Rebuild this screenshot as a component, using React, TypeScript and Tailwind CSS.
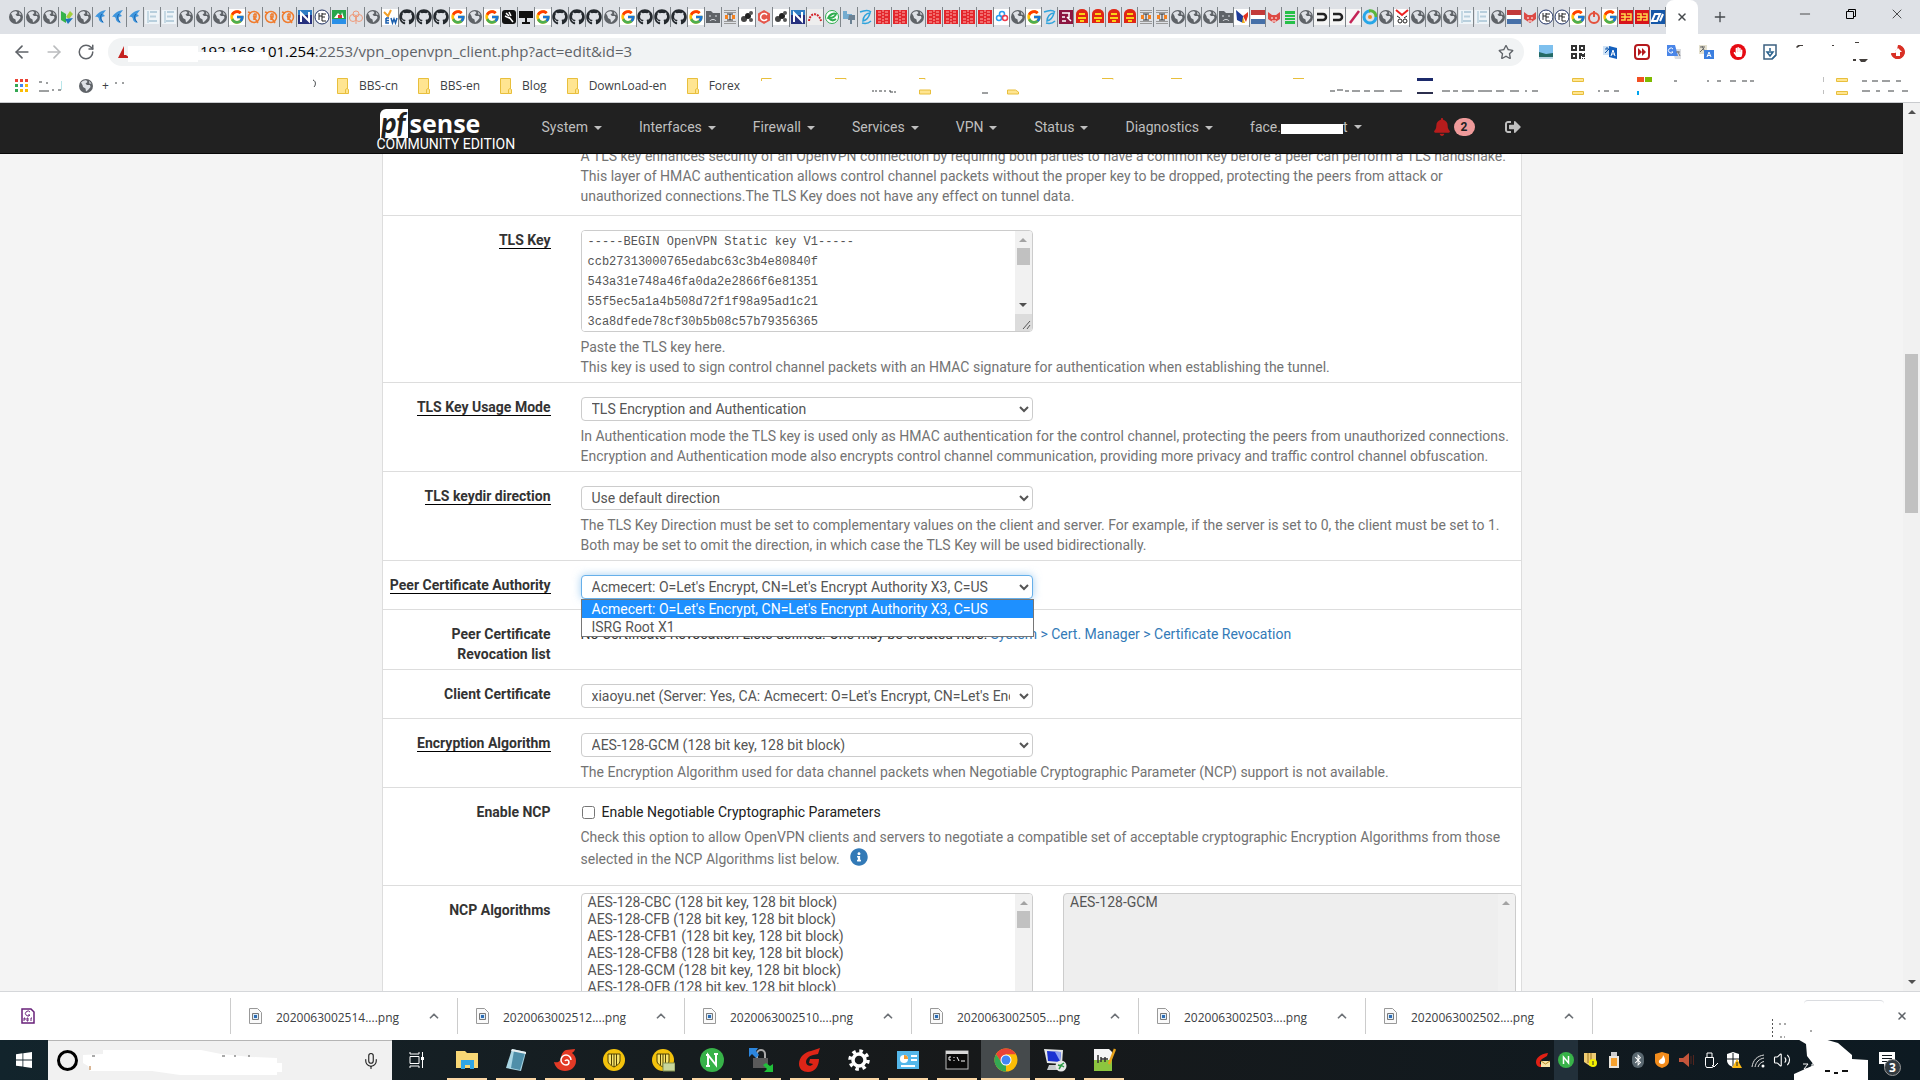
import type { ReactNode } from "react"
import { FcGoogle } from "react-icons/fc"
import { FaGithub, FaBell, FaSignOutAlt, FaInfoCircle, FaBluetoothB, FaQrcode, FaHandPaper, FaRegStar } from "react-icons/fa"
import { ArrowLeft, ArrowRight, RotateCw, ChevronUp, X, Plus, Minus, Mic, Volume2 } from "lucide-react"

const wideTabs =
    "globe globe globe leaf globe bird bird bird doc doc globe globe globe google orange orange orange navy he picture bio globe ew github github github google globe google hand wine google github github github globe google github github github google sad board bug hex bug navy arc eco blocks pen grid grid globe grid grid grid grid".split(" ")
const narrowTabs =
    "cloud globe google pen maroon guard guard guard guard board board globe globe globe sad butterfly flag cat stack globe magnet magnet feather swirl globe knot globe globe globe doc doc globe flag cat he he google power google red red dm".split(" ")

const menus = ["System", "Interfaces", "Firewall", "Services", "VPN", "Status", "Diagnostics"]

const tlsKey = `-----BEGIN OpenVPN Static key V1-----
ccb27313000765edabc63c3b4e80840f
543a31e748a46fa0da2e2866f6e81351
55f5ec5a1a4b508d72f1f98a95ad1c21
3ca8dfede78cf30b5b08c57b79356365`

const algorithms = ["CBC", "CFB", "CFB1", "CFB8", "GCM", "OFB"]
const downloads = ["2020063002514", "2020063002512", "2020063002510", "2020063002505", "2020063002503", "2020063002502"]

function Svg({ children, size = "h-4 w-4", box = "0 0 16 16" }: { children: ReactNode; size?: string; box?: string }) {
    return (
        <svg viewBox={box} className={`${size} shrink-0`} aria-hidden="true">
            {children}
        </svg>
    )
}

const favicons: Record<string, ReactNode> = {
    globe: (
        <>
            <circle cx="8" cy="8" r="7" fill="#5f6368" />
            <path d="M3 4.500c2-2 4-2.500 5.500-2l1 1.500-2 1.500 1.500 1.500h3l.5 2-2.500 3-2 1.500-.5-3-2.500-1.500L4.500 7zM11 2.800l2.500 2.700-2 .2z" fill="#dee1e6" />
        </>
    ),
    leaf: <><path d="M2 2l5 3v9l-5-3z" fill="#36b34a" /><path d="M7 8l4-6 3 3-4 5z" fill="#a5cf3a" /><path d="M6 10l8-1-5 6z" fill="#1c75bc" /></>,
    bird: <><path d="M13 1C7 2 4 5 2 8c3-1 4 1 4 3 1 2 3 3 5 3-2-2-3-4-2-6l3-1-2-2z" fill="#3f96dd" /><path d="M9 5c-2 2-2 5 1 8" stroke="#155fa8" fill="none" /></>,
    doc: <><rect x="1" y="1" width="14" height="14" fill="#eef4f8" /><path d="M4 2v12" stroke="#c6d9e4" strokeWidth="2" /><path d="M6 3h7M6 7.500h6M5 12h8" stroke="#b8cfdd" strokeWidth="2" /></>,
    orange: <><circle cx="8" cy="8" r="5.500" stroke="#f07c2e" strokeWidth="1.500" fill="none" /><path d="M2 3l3 1M8 5v6M8 5h2v3H8l4 6" stroke="#f07c2e" strokeWidth="1.500" fill="none" /></>,
    navy: <><rect x="1" y="1" width="14" height="14" fill="#26307e" /><path d="M1 1h14v5H1z" fill="#2f7dc4" /><path d="M4 13V4l8 8V3" stroke="#fff" strokeWidth="2" fill="none" /></>,
    he: <><circle cx="8" cy="8" r="7" fill="#fff" stroke="#1f3163" /><path d="M5 4v7M8 4v8M5 7h3M8 5h4M8 8h3M8 12h4" stroke="#222" fill="none" /></>,
    picture: <><rect x="1" y="1" width="14" height="14" fill="#27a54a" /><path d="M1 10h14v5H1z" fill="#2a90e8" /><path d="M3 9l4-5 3 3 1-4 2 6z" fill="#fff" /><path d="M7 6h4v3H7z" fill="#d33" /></>,
    bio: <><circle cx="8" cy="5" r="3" stroke="#ee9b7c" fill="none" /><circle cx="5" cy="9" r="3.500" stroke="#ee9b7c" fill="none" /><circle cx="11" cy="9" r="3.500" stroke="#ee9b7c" fill="none" /><path d="M8 7v8" stroke="#ee9b7c" /></>,
    ew: <><rect width="16" height="16" fill="#fff" /><path d="M2 3l4 4 3-6" stroke="#f2a02a" strokeWidth="2" fill="none" /><path d="M4 9h3M4 9v5h3M4 11.500h3M9 9l1.500 5L12 10l1.500 4L15 9" stroke="#1b5fae" strokeWidth="1.500" fill="none" /></>,
    hand: <><rect x="1" y="1" width="14" height="14" rx="3" fill="#111" /><path d="M5 4l3 3M8 3l2 4M4 7l6 3M8 8l4 5" stroke="#fff" strokeWidth="1.500" /></>,
    wine: <path d="M1 2h14v7H9v4h3v2H4v-2h3V9H1z" fill="#111" />,
    sad: <><path d="M1 2h5l2 2h7v10H1z" fill="#5f6368" /><path d="M4 7h2M10 7h2M5 12c1-2 5-2 6 0" stroke="#dee1e6" fill="none" /></>,
    board: <><path d="M2 1.500h12M2 3.500h12M2 12.500h12M2 14.500h12" stroke="#999" /><path d="M5 5h6M5 11h6M8 5v6" stroke="#333" /><path d="M3 6h3v4H3zM10 6h3v4h-3z" fill="#f58220" /></>,
    bug: <><rect width="16" height="16" fill="#fff" /><circle cx="5" cy="10" r="3" fill="#444" /><circle cx="9" cy="7" r="3" fill="#222" /><circle cx="12" cy="4" r="2" fill="#555" /><circle cx="12" cy="11" r="2" fill="#555" /></>,
    hex: <><path d="M8 1l6 3.500v7L8 15l-6-3.500v-7z" fill="#e5564b" /><path d="M11 6a3.500 3.500 0 100 4" stroke="#fff" strokeWidth="1.500" fill="none" /></>,
    arc: <><rect width="16" height="16" fill="#eee" /><path d="M2 12C3 3 12 3 14 12" stroke="#d3242b" strokeWidth="2" strokeDasharray="2 1" fill="none" /></>,
    eco: <><circle cx="8" cy="8" r="6.500" fill="#fff" stroke="#2fae4e" /><path d="M4 10c1-5 6-6 8-5-1 3-3 4-7 4 2 3 4 3 7 1" stroke="#2fae4e" strokeWidth="2" fill="none" /></>,
    blocks: <><path d="M2 2h4v3h5v5H2z" fill="#74acd0" /><path d="M8 6h6v5h-3v4H9v-4H7z" fill="#6c8294" /></>,
    pen: <path d="M12 4C8 4 5 8 5 12c4-1 6-4 7-8zM2 3c5-2 9-2 11 0M4 14c4 1 7 0 9-2" stroke="#2ea3dc" strokeWidth="1.500" fill="none" />,
    grid: <><rect x="1" y="1" width="14" height="14" fill="#e3262c" /><path d="M3 3h3M10 3h3M3 6h3M10 6h3M3 10h3M10 10h3M3 13h3M10 13h3" stroke="#ffb3ae" /><path d="M8 1v14" stroke="#ffb3ae" strokeDasharray="2 1" /></>,
    cloud: <><rect width="16" height="16" fill="#fff" /><circle cx="8" cy="5" r="2.500" stroke="#2a9df0" strokeWidth="1.500" fill="none" /><circle cx="5" cy="9" r="2.500" stroke="#2a9df0" strokeWidth="1.500" fill="none" /><circle cx="11" cy="9" r="2.500" stroke="#ef3b4d" strokeWidth="1.500" fill="none" /></>,
    maroon: <><rect x="1" y="1" width="14" height="14" fill="#8c1540" /><path d="M4 4h8M4 8h3M9 8l4 4M4 12h4M11 4v5" stroke="#fff" strokeWidth="1.500" /></>,
    guard: <><path d="M2 5a6 5 0 0112 0v9H2z" fill="#e02615" /><path d="M5 5h6M4 9h8M6 12h4" stroke="#fbd016" strokeWidth="2" /></>,
    butterfly: <><rect width="16" height="16" fill="#fff" /><path d="M2 1l7 6v7L3 11z" fill="#1e3c9a" /><path d="M9 7l5-4v4l-2 6z" fill="#e2321f" /><path d="M9 8l2 6H8z" fill="#f3b31f" /></>,
    flag: <><path d="M1 1h14v5H1z" fill="#c23a3a" /><path d="M1 6h14v4H1z" fill="#fff" /><path d="M1 10h14v5H1z" fill="#4670a8" /></>,
    cat: <><path d="M2 3l4 3h4l4-3v7l-6 4-6-4z" fill="#dd4b45" /><path d="M5 9h2M9 9h2M6 12h4" stroke="#fff" /></>,
    stack: <path d="M3 2h10v3H3zM3 6h10v2H3zM3 9h10v2H3zM3 12h10v3H3z" fill="#27c04a" />,
    magnet: <><rect width="16" height="16" fill="#f5f5f5" /><path d="M3 5h6a3 3 0 010 6H3" stroke="#222" strokeWidth="2.500" fill="none" /></>,
    feather: <><rect width="16" height="16" fill="#f7f7f7" /><path d="M4 14L13 2" stroke="#c42456" strokeWidth="2.500" /></>,
    swirl: <><path d="M8 2a6 6 0 106 6" stroke="#27a7e8" strokeWidth="3" fill="none" /><path d="M7 2c4-1 7 2 7 6" stroke="#59b53d" strokeWidth="3" fill="none" /><circle cx="8" cy="8" r="2" fill="#f28a1f" /></>,
    knot: <><rect width="16" height="16" fill="#fff" /><path d="M2 1l6 5 6-5" stroke="#e22" strokeWidth="2" fill="none" /><path d="M3 7l3 2M13 7l-3 2" stroke="#222" /><circle cx="6" cy="12" r="2" stroke="#222" fill="none" /><circle cx="11" cy="12" r="2" stroke="#222" fill="none" /></>,
    power: <><circle cx="8" cy="9" r="5" stroke="#e4513c" strokeWidth="2" fill="none" /><path d="M8 2v6" stroke="#e4513c" strokeWidth="2" /></>,
    red: <><rect x="1" y="1" width="14" height="14" fill="#d8131b" /><path d="M3 5h4v6H3M9 5h4v6H9M3 8h10" stroke="#ffd84c" strokeWidth="1.500" fill="none" /></>,
    dm: <><rect x="1" y="1" width="14" height="14" fill="#1557a8" /><path d="M2 12h5l3-7H5zM10 12l3-7" stroke="#fff" strokeWidth="2" fill="none" /></>,
}

function Favicon({ name }: { name: string }) {
    if (name === "google") return <FcGoogle className="h-4 w-4 shrink-0 bg-white" />
    if (name === "github") return <FaGithub className="h-4 w-4 shrink-0 text-[#24292e]" />
    return <Svg>{favicons[name]}</Svg>
}

function TabStrip() {
    return (
        <div className="flex h-[34px] shrink-0 items-end bg-[#dee1e6] pl-2">
            {wideTabs.map((name, i) => (
                <button key={i} aria-label={`Tab ${i + 1}`} className="mb-[7px] flex h-5 w-[17px] shrink-0 items-center justify-center overflow-hidden border-r border-[#80868b]">
                    <Favicon name={name} />
                </button>
            ))}
            {narrowTabs.map((name, i) => (
                <button key={i} aria-label={`Tab ${i + 59}`} className="mb-[7px] flex h-5 w-4 shrink-0 items-center justify-center overflow-hidden border-r border-[#80868b]">
                    <Favicon name={name} />
                </button>
            ))}
            <button aria-label="Close tab" className="flex h-[34px] w-8 shrink-0 items-center justify-center rounded-t-lg bg-white text-[#45494d]">
                <X className="h-3 w-3" strokeWidth={3} />
            </button>
            <button aria-label="New tab" className="ml-3 flex h-[34px] w-5 items-center justify-center text-[#45494d]">
                <Plus className="h-4 w-4" />
            </button>
            <div className="ml-auto flex h-7 items-center self-start text-black">
                <button aria-label="Minimize" className="flex w-[46px] justify-center"><Minus className="h-4 w-4" strokeWidth={1} /></button>
                <button aria-label="Restore" className="flex w-[46px] justify-center">
                    <Svg size="h-3 w-3" box="0 0 12 12"><path d="M1.500 3.500h7v7h-7zM3.500 3.500v-2h7v7h-2" fill="none" stroke="#000" /></Svg>
                </button>
                <button aria-label="Close window" className="flex w-[46px] justify-center"><X className="h-4 w-4" strokeWidth={1} /></button>
            </div>
        </div>
    )
}

function Toolbar() {
    return (
        <div className="flex h-9 shrink-0 items-center bg-white text-[#5f6368]">
            <button aria-label="Back" className="ml-3"><ArrowLeft className="h-5 w-5" /></button>
            <button aria-label="Forward" className="ml-3 text-[#babcbe]"><ArrowRight className="h-5 w-5" /></button>
            <button aria-label="Reload" className="ml-[13px]"><RotateCw className="h-[18px] w-[18px]" /></button>
            <div className="relative ml-[13px] flex h-7 flex-1 items-center rounded-full bg-[#f1f3f4] px-[10px] font-['Open_Sans',sans-serif] text-[15px]">
                <Svg size="h-3 w-3" box="0 0 12 12"><path d="M6 0v9h2l4 3H0z" fill="#c5221f" /></Svg>
                <span className="ml-[70px] text-black">192.168.101.254</span>
                <input aria-label="Address" defaultValue=":2253/vpn_openvpn_client.php?act=edit&id=3" className="min-w-0 flex-1 bg-transparent outline-none" />
                <FaRegStar className="h-4 w-4" />
                <div className="absolute top-2 left-5 h-4 w-[70px] bg-white"></div>
                <div className="absolute top-[14px] left-[90px] h-2 w-[70px] bg-white"></div>
            </div>
            <div className="ml-[14px] flex w-[382px] items-center gap-4">
                <button aria-label="Image viewer"><Svg><rect x="1" y="1" width="14" height="14" fill="#7ec0ee" /><path d="M1 8l7 2 7-1v4H1z" fill="#236a66" /><path d="M1 13h14v2H1z" fill="#bcd6e4" /></Svg></button>
                <button aria-label="QR code"><FaQrcode className="h-4 w-4 text-[#333]" /></button>
                <button aria-label="Translate page"><Svg><path d="M1 2h8v9H1z" fill="#cfe2f5" /><path d="M3 5h5M5 3v2M3 9l4-4" stroke="#1358a8" /><path d="M7 2l8 2v11l-8-2z" fill="#1560bd" /><path d="M9 12l2-6 2 6M10 10h3" stroke="#fff" fill="none" /></Svg></button>
                <button aria-label="Fast forward"><Svg><rect x="1" y="1" width="14" height="14" rx="3" fill="#fff" stroke="#b5191d" strokeWidth="2" /><path d="M4 4l4 4-4 4zM8 4l4 4-4 4z" fill="#b5191d" /></Svg></button>
                <button aria-label="Google Translate"><Svg><path d="M6 5h9v10H9z" fill="#dadce0" /><path d="M1 1h8l3 11H1z" fill="#4a86e8" /><path d="M7 5a2.500 2.500 0 100 3H5.500" stroke="#fff" fill="none" /><path d="M10 8h4M12 7v1l2 4" stroke="#777" fill="none" /></Svg></button>
                <button aria-label="Translator"><Svg><path d="M1 1h8v9H1z" fill="#e4e0cf" /><path d="M2 3h5M4 2l3 6M6 4L2 8" stroke="#666" /><rect x="6" y="6" width="10" height="9" fill="#3c7fe0" /><path d="M9 13l2-5 2 5M9.500 11.500h3" stroke="#fff" fill="none" /></Svg></button>
                <button aria-label="Ad blocker" className="flex h-4 w-4 items-center justify-center rounded-full bg-[#e60a12] text-white"><FaHandPaper className="h-[10px] w-[10px]" /></button>
                <button aria-label="Downloader"><Svg><path d="M2 1h12v10l-4 4H2z" fill="#fff" stroke="#3c6080" strokeWidth="1.500" /><path d="M8 4v3M5 8l3 4 3-4zM14 11l-4 4" stroke="#2a638f" strokeWidth="1.500" fill="none" /></Svg></button>
                <Svg size="h-5 w-20" box="0 0 80 20"><path d="M2 5l2-2h5v1H6l-3 2zM61 0h4v1h-4zM38 3h2v1h-2zM59 17h3v2h-3zM65 17h9l-3 3h-4z" fill="#443f3c" /></Svg>
                <button aria-label="Menu"><Svg><path d="M8 1a7 7 0 11-7 8h5l-1-2 4-3 4 3H9v5h3z" fill="#d93025" /><path d="M8 1a7 7 0 11-7 9h5z" fill="#d93025" /><path d="M8 4l4 4h-2v4H6V8H4z" fill="#fff" /></Svg></button>
            </div>
        </div>
    )
}

function Folder() {
    return (
        <Svg size="h-[18px] w-3" box="0 0 12 18">
            <path d="M.5 1.500h10v15H.5z" fill="#ffe591" stroke="#e8bf3c" />
            <path d="M8.500 16.500v-4l1.500-1 1.500 1v4z" fill="#ffe591" stroke="#e8bf3c" />
        </Svg>
    )
}

function BookmarksBar() {
    return (
        <div className="flex h-[33px] shrink-0 items-center overflow-hidden border-b border-[#c9cbce] bg-white pl-[14px] font-['Open_Sans',sans-serif] text-xs text-[#3c4043]">
            <div className="flex w-[323px] shrink-0 items-center">
                <a href="#apps" aria-label="Apps">
                    <Svg>
                        <path d="M1 1h3v3H1zM6 1h3v3H6zM11 1h3v3h-3z" fill="#ea4335" />
                        <path d="M1 6h3v3H1zM1 11h3v3H1z" fill="#34a853" />
                        <path d="M6 6h3v3H6z" fill="#4285f4" />
                        <path d="M11 6h3v3h-3zM6 11h3v3H6zM11 11h3v3h-3z" fill="#fbbc05" />
                    </Svg>
                </a>
                <Svg size="ml-2 h-4 w-6" box="0 0 24 16"><path d="M1 4h3M1 13h10M14 12h2M20 12h3M8 5h2" stroke="#3c4043" /><path d="M23.500 3v9" stroke="#b9e6ea" /></Svg>
                <a href="#site" className="ml-4 flex items-center gap-2"><Favicon name="globe" />+</a>
                <Svg size="h-4 w-4"><path d="M6 5h2M13 5h2" stroke="#3c4043" /></Svg>
                <Svg size="ml-[184px] h-4 w-4"><path d="M4 2c3 1 3 5 1 7" stroke="#3c4043" fill="none" /></Svg>
            </div>
            <div className="flex items-center gap-5">
                <a href="#bbs-cn" className="flex items-center gap-[10px]"><Folder />BBS-cn</a>
                <a href="#bbs-en" className="flex items-center gap-[10px]"><Folder />BBS-en</a>
                <a href="#blog" className="flex items-center gap-[10px]"><Folder />Blog</a>
                <a href="#download" className="flex items-center gap-[10px] whitespace-nowrap"><Folder />DownLoad-en</a>
                <a href="#forex" className="flex items-center gap-[10px]"><Folder />Forex</a>
            </div>
            <svg viewBox="0 0 1160 18" className="ml-5 h-[18px] w-[1160px] shrink-0" aria-hidden="true">
                <path d="M1.500 4V1.500h10M75 1.500h11v1M159 1.500h6v1M342 1.500h11v1M411 1.500h11M533 1.500h11" stroke="#e8bf3c" fill="none" />
                <path d="M159.500 13v4h11v-4zM247.500 13v4h11v-2l-3-2zM812.500 1.500h11v3h-11zM812.500 14.500h11v3h-11zM1076.500 1.500h11v3h-11zM1076.500 14.500h11v3h-11z" fill="#ffe591" stroke="#e8bf3c" />
                <path d="M113 13v2M116 13v2M119 14h3M125 13v2M130 13v2h3M135 14v2M222 16h6M570 14h5M577 13h6M585 14h4M592 14h8M604 14h6M614 14h10M630 14h12M682 14h8M693 14h5M702 14h12M718 14h14M736 14h8M750 14h9M765 14h2M772 14h6M838 14h2M844 14h5M854 14h5M914 4h3M947 4h2M957 4h4M970 4h6M982 4h5M990 4h4M1102 4h5M1112 4h6M1122 4h8M1136 4h5M1102 14h8M1116 14h4M1128 14h6M1142 14h6" stroke="#3c4043" fill="none" />
                <path d="M657 1h16v3h-16z" fill="#1c2a6b" /><path d="M657 15h16v2h-16z" fill="#2c2f4e" />
                <path d="M877 0h7v5h-7z" fill="#f25022" /><path d="M885 0h7v5h-7z" fill="#7fba00" /><path d="M877 14h2v4h-2z" fill="#00a4ef" />
                <path d="M1063.500 0v5M1063.500 13v4" stroke="#c0c0c0" />
            </svg>
        </div>
    )
}

function Caret() {
    return <span className="ml-[6px] inline-block border-x-4 border-t-4 border-x-transparent border-t-current align-middle"></span>
}

function Navbar() {
    return (
        <nav className="h-[51px] shrink-0 border-b border-[#080808] bg-[#212121]">
            <div className="mx-auto flex h-full w-full max-w-[1150px] text-[#bfbfbf]">
                <a href="#home" className="flex w-[165px] shrink-0 flex-col pt-[6px] text-white">
                    <span className="flex h-7 items-start">
                        <span className="ml-[3px] h-[29px] w-7 rounded-tl-md bg-white text-center font-['Lato',sans-serif] text-[28px]/[26px] font-black text-[#212121] italic">pf</span>
                        <span className="ml-[2px] font-['Open_Sans',sans-serif] text-[25px]/[28px] font-bold">sense</span>
                    </span>
                    <span className="text-sm/[14px]">COMMUNITY EDITION</span>
                </a>
                <div className="flex flex-1 items-center gap-[37px] pb-[2px]">
                    {menus.map((menu) => (
                        <button key={menu} className="whitespace-nowrap">{menu}<Caret /></button>
                    ))}
                    <button className="flex items-center whitespace-nowrap">
                        face.<span className="mt-[3px] h-[10px] w-[62px] bg-white"></span>t<Caret />
                    </button>
                    <div className="ml-auto flex items-center pr-[6px]">
                        <button aria-label="Notices" className="flex items-center">
                            <FaBell className="h-[18px] w-4 text-[#b71c1c]" />
                            <span className="ml-1 flex h-[18px] w-[21px] items-center justify-center rounded-full bg-[#ef9a9a] text-xs font-bold text-[#212121]">2</span>
                        </button>
                        <button aria-label="Logout" className="ml-[30px]"><FaSignOutAlt className="h-4 w-4" /></button>
                    </div>
                </div>
            </div>
        </nav>
    )
}

function Row({ label, htmlFor, help, children }: { label: string; htmlFor?: string; help?: boolean; children: ReactNode }) {
    return (
        <div className="grid grid-cols-[168px_1fr] gap-x-[30px] border-t border-[#ddd] pt-[14px] pr-[5px] pb-[5px]">
            <label htmlFor={htmlFor} className="text-right font-bold text-[#333]">
                <span className={help ? "border-b border-black" : ""}>{label}</span>
            </label>
            <div className="min-w-0">{children}</div>
        </div>
    )
}

function Help({ children }: { children: ReactNode }) {
    return <p className="mt-[5px] text-[#737373]">{children}</p>
}

function Field({ id, value, focus }: { id: string; value: string; focus?: boolean }) {
    return (
        <select
            id={id}
            defaultValue={value}
            className={`block h-6 w-[452px] rounded-sm border bg-white px-[6px] text-[#555] ${focus ? "border-[#66afe9] shadow-[0_0_8px_rgba(102,175,233,0.6)]" : "border-[#ccc]"}`}
        >
            <option>{value}</option>
        </select>
    )
}

function Scroll({ thumb, down }: { thumb?: boolean; down?: boolean }) {
    return (
        <div className="flex w-[17px] shrink-0 flex-col items-center bg-[#f1f1f1] py-[7px]">
            <span className="border-x-4 border-b-4 border-x-transparent border-b-[#a3a3a3]"></span>
            {thumb && <span className="mt-[6px] h-[17px] w-[13px] bg-[#c1c1c1]"></span>}
            {down && <span className="mt-[38px] border-x-4 border-t-4 border-x-transparent border-t-[#505050]"></span>}
        </div>
    )
}

function ClientForm() {
    return (
        <div className="mx-auto w-full max-w-[1140px] border-x border-[#ddd] bg-white text-sm/5">
            <div className="-mt-2 grid grid-cols-[168px_1fr] gap-x-[30px] pr-[5px] pb-[9px]">
                <p className="col-start-2 text-[#737373]">
                    A TLS key enhances security of an OpenVPN connection by requiring both parties to have a common key before a peer can perform a TLS handshake.<br />
                    This layer of HMAC authentication allows control channel packets without the proper key to be dropped, protecting the peers from attack or<br />
                    unauthorized connections.The TLS Key does not have any effect on tunnel data.
                </p>
            </div>
            <Row label="TLS Key" htmlFor="tls" help>
                <div className="relative flex h-[102px] w-[452px] overflow-hidden rounded-sm border border-[#ccc]">
                    <textarea id="tls" defaultValue={tlsKey} className="flex-1 resize-none overflow-hidden bg-white px-[6px] pt-px font-['Liberation_Mono',monospace] text-xs/5 text-[#555] outline-none" />
                    <Scroll thumb down />
                    <svg viewBox="0 0 17 17" className="absolute right-0 bottom-0 h-[17px] w-[17px] bg-[#dcdcdc]" aria-hidden="true">
                        <path d="M8 15l7-8M12 15l3-4" stroke="#555" />
                    </svg>
                </div>
                <Help>
                    Paste the TLS key here.<br />
                    This key is used to sign control channel packets with an HMAC signature for authentication when establishing the tunnel.
                </Help>
            </Row>
            <Row label="TLS Key Usage Mode" htmlFor="mode" help>
                <Field id="mode" value="TLS Encryption and Authentication" />
                <Help>
                    In Authentication mode the TLS key is used only as HMAC authentication for the control channel, protecting the peers from unauthorized connections.<br />
                    Encryption and Authentication mode also encrypts control channel communication, providing more privacy and traffic control channel obfuscation.
                </Help>
            </Row>
            <Row label="TLS keydir direction" htmlFor="keydir" help>
                <Field id="keydir" value="Use default direction" />
                <Help>
                    The TLS Key Direction must be set to complementary values on the client and server. For example, if the server is set to 0, the client must be set to 1.<br />
                    Both may be set to omit the direction, in which case the TLS Key will be used bidirectionally.
                </Help>
            </Row>
            <Row label="Peer Certificate Authority" htmlFor="ca" help>
                <div className="relative mb-[5px]">
                    <Field id="ca" value="Acmecert: O=Let's Encrypt, CN=Let's Encrypt Authority X3, C=US" focus />
                    <ul className="absolute top-6 left-0 z-10 w-[453px] border border-[#767676] bg-white text-sm/[18px] text-[#555]">
                        <li className="bg-[#1e90ff] px-[10px] text-white">Acmecert: O=Let's Encrypt, CN=Let's Encrypt Authority X3, C=US</li>
                        <li className="px-[10px]">ISRG Root X1</li>
                    </ul>
                </div>
            </Row>
            <Row label="Peer Certificate Revocation list">
                <p className="text-[#333]">
                    No Certificate Revocation Lists defined. One may be created here: <a href="#crl" className="text-[#337ab7]">System &gt; Cert. Manager &gt; Certificate Revocation</a>
                </p>
            </Row>
            <Row label="Client Certificate" htmlFor="cert">
                <div className="mb-[5px]">
                    <Field id="cert" value="xiaoyu.net (Server: Yes, CA: Acmecert: O=Let's Encrypt, CN=Let's Encrypt Authority X3, C=US)" />
                </div>
            </Row>
            <Row label="Encryption Algorithm" htmlFor="algo" help>
                <Field id="algo" value="AES-128-GCM (128 bit key, 128 bit block)" />
                <Help>The Encryption Algorithm used for data channel packets when Negotiable Cryptographic Parameter (NCP) support is not available.</Help>
            </Row>
            <Row label="Enable NCP" htmlFor="ncp">
                <label className="flex items-center gap-[7px] pl-px text-[#212121]">
                    <input id="ncp" type="checkbox" className="h-[13px] w-[13px]" />
                    Enable Negotiable Cryptographic Parameters
                </label>
                <div className="mb-[9px]">
                    <Help>Check this option to allow OpenVPN clients and servers to negotiate a compatible set of acceptable cryptographic Encryption Algorithms from those</Help>
                    <p className="flex h-6 items-center text-[#737373]">
                        selected in the NCP Algorithms list below.
                        <button aria-label="More information" className="mb-1 ml-[10px] text-[#337ab7]"><FaInfoCircle className="h-[18px] w-[18px]" /></button>
                    </p>
                </div>
            </Row>
            <div className="grid grid-cols-[168px_1fr] gap-x-[30px] border-t border-[#ddd] pt-[7px] pr-[5px]">
                <label htmlFor="ncp-list" className="pt-[7px] text-right font-bold text-[#333]">NCP Algorithms</label>
                <div className="grid grid-cols-2 gap-[30px]">
                    <div className="flex h-[170px] overflow-hidden rounded-sm border border-[#ccc]">
                        <select id="ncp-list" multiple className="flex-1 overflow-hidden px-1 text-[#555]">
                            {algorithms.map((mode) => (
                                <option key={mode} className="h-[17px] min-h-0 px-[2px] py-0 text-sm/[17px]">{`AES-128-${mode} (128 bit key, 128 bit block)`}</option>
                            ))}
                        </select>
                        <Scroll thumb />
                    </div>
                    <div className="flex h-[170px] overflow-hidden rounded-sm border border-[#ccc] bg-[#eee]">
                        <select aria-label="Allowed NCP Algorithms" multiple className="flex-1 overflow-hidden px-1 text-[#555]">
                            <option className="h-[17px] min-h-0 px-[2px] py-0 text-sm/[17px]">AES-128-GCM</option>
                        </select>
                        <Scroll />
                    </div>
                </div>
            </div>
        </div>
    )
}

function DownloadBar() {
    return (
        <div className="flex h-[49px] shrink-0 items-center border-t border-[#d5d7da] bg-white font-['Open_Sans',sans-serif] text-xs text-[#3c4043]">
            <div className="flex h-9 w-[231px] items-center border-r border-[#ccc] pl-[21px]">
                <Svg size="h-4 w-[14px]" box="0 0 14 16">
                    <path d="M1 1h9l3 3v11H1z" fill="#fff" stroke="#68217a" strokeWidth="1.500" />
                    <path d="M9 4a2.500 2.500 0 100 3H7M3 10v3M3 10h1v2M6 10v3h1v-3zM10 13v-3h1" stroke="#68217a" fill="none" />
                </Svg>
            </div>
            {downloads.map((name) => (
                <div key={name} className="flex h-9 w-[227px] items-center border-r border-[#ccc] pl-[18px]">
                    <Svg size="h-4 w-[13px]" box="0 0 13 16">
                        <path d="M.5.5h8l4 4v11H.5z" fill="#fafafa" stroke="#999" />
                        <path d="M3.500 5.500h6v6h-6z" fill="#dcebf7" stroke="#777" />
                        <path d="M5 7h3v3H5z" fill="#2d6db5" />
                    </Svg>
                    <span className="ml-[14px] w-[151px] pt-1">{name}....png</span>
                    <button aria-label="Download options"><ChevronUp className="h-[14px] w-[14px] text-[#6f7378]" strokeWidth={3} /></button>
                </div>
            ))}
            <div className="ml-auto flex items-center pr-3">
                <div className="mr-3 h-8 w-20 rounded-t-sm border-t border-[#dadce0]"></div>
                <button aria-label="Close downloads bar"><X className="h-3 w-3 text-[#5f6368]" strokeWidth={3} /></button>
            </div>
        </div>
    )
}

const shield = (
    <>
        <circle cx="12" cy="12" r="11" fill="#f3c20c" />
        <path d="M6 6h12v7c0 3-4 5-6 6-2-1-6-3-6-6z" fill="#f9e46b" stroke="#4f4104" />
        <path d="M9.500 6v11M12 6v13M14.500 6v11" stroke="#4f4104" />
    </>
)

const apps: { label: string; art: ReactNode; active?: boolean }[] = [
    { label: "File Explorer", art: <><path d="M1 3h9l2 2h11v15H1z" fill="#f8d775" /><path d="M6 12h13v9h-4v-4h-5v4H6z" fill="#2fa5e5" /></> },
    { label: "Notepad", art: <><path d="M8 1l14 3-5 19L2 20z" fill="#a9d6e4" /><path d="M10 3l11 2-5 17-9-2z" fill="#4f8fa9" /><path d="M8 1l14 3v2L7 3z" fill="#e8eef0" /></> },
    { label: "Foxmail", art: <><path d="M13 2l9-1c0 2-2 3-3 4 3 2 4 5 4 8 0 6-5 10-11 10C6 23 2 19 1 14c5 1 6-1 7-4 0-3 2-7 5-8z" fill="#e33a26" /><path d="M18 12a5 5 0 10-5 5c2 0 3-1 3-3s-3-3-4-1" stroke="#fff" strokeWidth="1.500" fill="none" /></> },
    { label: "Shield", art: shield },
    { label: "Shield manager", art: <>{shield}<path d="M12 15h12v8H12z" fill="#c9d79c" stroke="#829150" /></> },
    { label: "Navicat", art: <><circle cx="12" cy="12" r="12" fill="#38b249" /><path d="M8 18V7l8 10V6M6 7h3M6 18h4M14 6h4" stroke="#fff" strokeWidth="2" fill="none" /></> },
    { label: "WinSCP", art: <><path d="M8 11V6a4 4 0 018 0v5" stroke="#aaa" strokeWidth="2" fill="none" /><path d="M4 10h15v10H4z" fill="#5a5a5a" /><path d="M0 0h9L7 3l3 4-3 3-4-4-3 3z" fill="#2c86de" /><path d="M24 24h-9l3-3-4-4 3-2 4 3 3-2z" fill="#21c03a" /></> },
    { label: "Gfx", art: <path d="M22 0l-2 6-5 1c-4 1-7 4-7 7 0 4 5 5 7 2l-4-1 1-4h9c0 7-4 13-11 13-5 0-9-3-9-8C1 9 7 4 13 3z" fill="#dd2517" /> },
    { label: "Settings", art: <><circle cx="12" cy="12" r="6" stroke="#fff" strokeWidth="3.500" fill="none" /><circle cx="12" cy="12" r="9" stroke="#fff" strokeWidth="3.500" strokeDasharray="3.500 3.570" fill="none" /></> },
    { label: "Control Panel", art: <><rect x="1" y="3" width="22" height="18" fill="#54b7ea" /><circle cx="8" cy="11" r="4" fill="#fff" /><path d="M8 11V7a4 4 0 014 4z" fill="#f29a2e" /><path d="M15 8h6M15 12h6M5 18h14" stroke="#fff" strokeWidth="2" /></> },
    { label: "Command Prompt", art: <><rect x="1" y="3" width="22" height="18" fill="#0a0a0a" stroke="#bbb" /><path d="M1 3h22v3H1z" fill="#d8d8d8" /><path d="M4 9h2M4 9v3h2M9 9v1M9 12v1M12 9l2 4M16 13h4" stroke="#fff" /></> },
    { label: "Chrome", active: true, art: <><circle cx="12" cy="12" r="11.500" fill="#fbbc05" /><path d="M2 6.250A11.500 11.500 0 0122 6.250H12l-4.500 8.400z" fill="#ea4335" /><path d="M2 6.250L7.500 14.500 12 16.800 12 23.500A11.500 11.500 0 012 6.250z" fill="#34a853" /><circle cx="12" cy="12" r="5.500" fill="#fff" /><circle cx="12" cy="12" r="4.500" fill="#4285f4" /></> },
    { label: "Remote Desktop", art: <><path d="M1 1l19 1-1 14-15-1z" fill="#e3e5e6" /><path d="M4 3l14 1-1 10-12-1z" fill="#1a31d2" /><path d="M12 4l6 0-1 9z" fill="#8fa2f2" /><path d="M6 17h8l3 5H4z" fill="#c5c9cb" /><circle cx="18" cy="18" r="5.500" fill="#e8e8e8" /><path d="M15 17l3 1-2 3M21 15l-3 2 3 2" stroke="#2b9a44" strokeWidth="1.500" fill="none" /></> },
    { label: "Notepad++", art: <><path d="M2 1h15l3 3v19H2z" fill="#f5f5f5" /><path d="M2 12h18v11H2z" fill="#8cc63f" /><path d="M6 7v8M9 9v5M13 9v5M9 11h7" stroke="#333" strokeWidth="1.500" /><path d="M23 1l-6 15" stroke="#e8a31c" strokeWidth="2.500" /></> },
]

const tray: ReactNode[] = [
    <Svg><path d="M14 1C6 2 2 6 2 10c0 3 2 5 5 5s5-2 6-5H8v2h2c-4 3-6-2-2-5l5-3z" fill="#e02015" /><path d="M7 9h9v6H7z" fill="#f7e4a8" /><path d="M7 9l4.500 3L16 9" stroke="#b98d28" fill="none" /></Svg>,
    <Svg><circle cx="8" cy="8" r="8" fill="#38b249" /><path d="M5.500 12V5l5 6V4" stroke="#fff" strokeWidth="1.500" fill="none" /></Svg>,
    <Svg><path d="M2 1h12v9l-6 4-6-4z" fill="#eecb73" /><path d="M6 1v10M9 1v10" stroke="#9c7421" /><circle cx="11" cy="11" r="4" fill="#f4f000" /><path d="M11 9v4" stroke="#333" /></Svg>,
    <Svg><path d="M5 0h6v4H5z" fill="#ccc" /><path d="M3 4h10v12H3z" fill="#e9e4dc" /><path d="M5 6h6v8H5z" fill="#f4a02e" /></Svg>,
    <span className="flex h-4 w-3 items-center justify-center rounded-full bg-[#5a6870] text-white"><FaBluetoothB className="h-3 w-3" /></span>,
    <Svg><path d="M8 0l7 2v7c0 4-4 6-7 7-3-1-7-3-7-7V2z" fill="#f28c1c" /><path d="M9 3c3 4 3 9-1 9s-4-4-1-5c1-1 2-2 2-4z" fill="#fff" /></Svg>,
    <Svg><path d="M1 6h4l6-5v14l-6-5H1z" fill="#c4553b" /><path d="M13 4v8M15.500 3v10" stroke="#53251e" /></Svg>,
    <Svg><path d="M5 5V1h5v4M3.500 5.500h8v8l-1 2h-6l-1-2z" stroke="#fff" fill="none" /><path d="M10 13l2 2 4-4" stroke="#fff" fill="none" /></Svg>,
    <Svg><path d="M7 0l6 2v6c0 4-3 6-6 7-3-1-6-3-6-7V2z" fill="#fff" /><path d="M7 1v13M1 7h12" stroke="#10191f" /><path d="M11 7l5 9H6z" fill="#fcb913" /><path d="M11 10v4" stroke="#222" /></Svg>,
    <Svg><path d="M2 15C3 8 7 4 14 3M5 15c1-5 4-8 9-9M8 15c1-3 3-5 6-5.500" stroke="#ddd" fill="none" /><circle cx="13" cy="14" r="1.500" fill="#fff" /></Svg>,
    <Volume2 className="h-[18px] w-[18px] text-white" strokeWidth={1.5} />,
]

function Taskbar() {
    return (
        <div className="relative flex h-10 shrink-0 bg-linear-to-r from-[#12242c] via-[#17191a] to-[#0d1a22]">
            <button aria-label="Start" className="flex w-12 items-center justify-center">
                <Svg><path d="M0 2.300l6.500-1v6.200H0zM7.300 1.200L16 0v7.500H7.300zM0 8.400h6.500v6.200L0 13.700zM7.300 8.400H16V16l-8.700-1.200z" fill="#fff" /></Svg>
            </button>
            <div className="relative flex w-[344px] items-center border-t border-[#b5b5b5] bg-[#f1f1f1] pl-[9px]">
                <span className="h-[21px] w-[21px] shrink-0 rounded-full border-[3px] border-black"></span>
                <input aria-label="Search" className="min-w-0 flex-1 bg-transparent outline-none" />
                <button aria-label="Voice search" className="mr-3"><Mic className="h-[18px] w-[18px] text-[#222]" strokeWidth={1.5} /></button>
                <svg viewBox="0 0 200 26" className="absolute top-2 left-[34px] h-[26px] w-[200px]" aria-hidden="true">
                    <path d="M1 6l20-1V1h98l20 4 30 3 26 1v5h6v9h-6v3H98l-28-4H8l-2-5-5-3z" fill="#fff" />
                    <path d="M10 7h3M140 7h3M152 7h2M166 7h2" stroke="#555" />
                    <path d="M8 17v4" stroke="#b6702f" />
                </svg>
            </div>
            <button aria-label="Task view" className="flex w-[50px] items-center justify-center">
                <Svg><path d="M1 0v2h9V0M1 16v-2h9v2M1 4.500h9v7H1zM13.500 0v16" stroke="#fff" fill="none" /><path d="M12 5h3v3h-3z" fill="#fff" /></Svg>
            </button>
            {apps.map((app) => (
                <button
                    key={app.label}
                    aria-label={app.label}
                    className={`flex w-[49px] shrink-0 flex-col items-center justify-between pt-2 ${app.active ? "bg-[#454a4c]" : ""}`}
                >
                    <Svg size="h-6 w-6" box="0 0 24 24">{app.art}</Svg>
                    <span className={app.active ? "h-[2px] w-full bg-[#fbd7a5]" : "h-[2px] w-10 bg-[#fbd7a5]"}></span>
                </button>
            ))}
            <div className="ml-auto flex">
                {tray.map((icon, i) => (
                    <button key={i} aria-label={`Tray item ${i + 1}`} className={`flex w-6 items-center justify-center ${i === 1 ? "bg-[#22303a]" : ""}`}>{icon}</button>
                ))}
                <button aria-label="Notifications" className="relative ml-[76px] flex w-[50px] items-center pl-[9px]">
                    <Svg><path d="M0 0h16v12H8l-3 4v-4H0z" fill="#fff" /><path d="M3 3.500h10M3 6.500h10M3 9.500h6" stroke="#10191f" /></Svg>
                    <span className="absolute top-[19px] left-[14px] flex h-[17px] w-[17px] items-center justify-center rounded-full border border-[#999] bg-[#333b40] font-['Open_Sans',sans-serif] text-xs font-bold text-white">3</span>
                </button>
            </div>
            <svg viewBox="0 0 120 64" className="absolute right-[50px] bottom-0 h-16 w-[120px]" aria-hidden="true">
                <path d="M34 15l30-4 10 12 14 4 14 12v4l16 1v20H44v-6l20-9-7-9-1-12z" fill="#fff" />
                <path d="M53 48h5l-4 5h5M62 48h3v5h-3z" stroke="#fff" fill="none" />
                <path d="M75 55h5M84 57h4M92 55h6" stroke="#111" strokeWidth="2" fill="none" />
                <path d="M22.500 3v20M30 7v4M34 8h3M30 21h5M60 15h3" stroke="#555" strokeDasharray="2 2" fill="none" />
            </svg>
        </div>
    )
}

export default function App() {
    return (
        <div className="flex h-screen flex-col overflow-hidden bg-[#f4f4f4] font-['Roboto',sans-serif] text-sm">
            <TabStrip />
            <Toolbar />
            <BookmarksBar />
            <div className="flex min-h-0 flex-1">
                <main className="flex min-w-0 flex-1 flex-col overflow-hidden">
                    <Navbar />
                    <div className="min-h-0 flex-1 overflow-hidden"><ClientForm /></div>
                </main>
                <div className="flex w-[17px] shrink-0 flex-col items-center bg-[#f1f1f1] py-[7px]">
                    <span className="border-x-4 border-b-4 border-x-transparent border-b-[#505050]"></span>
                    <span className="mt-[240px] h-[159px] w-[13px] bg-[#c1c1c1]"></span>
                    <span className="mt-auto border-x-4 border-t-4 border-x-transparent border-t-[#505050]"></span>
                </div>
            </div>
            <DownloadBar />
            <Taskbar />
        </div>
    )
}
